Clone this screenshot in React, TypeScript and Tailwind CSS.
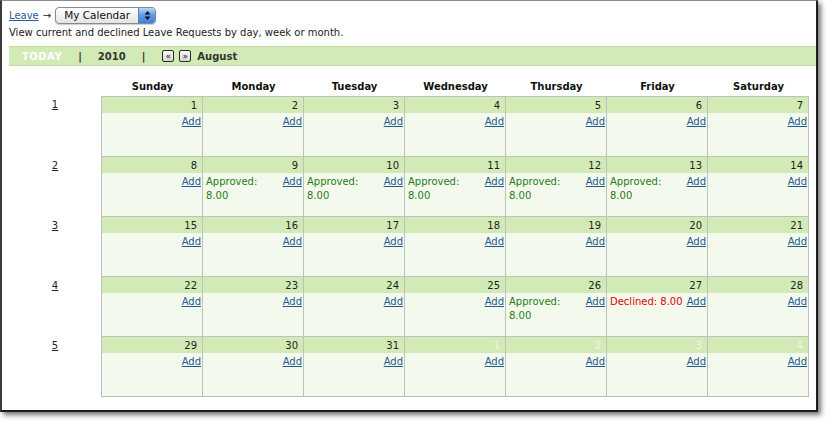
import React from "react";

const weeks: { n: number; other?: boolean; status?: "approved" | "declined" }[][] = [
  [1, 2, 3, 4, 5, 6, 7].map((n) => ({ n })),
  [
    { n: 8 },
    { n: 9, status: "approved" },
    { n: 10, status: "approved" },
    { n: 11, status: "approved" },
    { n: 12, status: "approved" },
    { n: 13, status: "approved" },
    { n: 14 },
  ],
  [15, 16, 17, 18, 19, 20, 21].map((n) => ({ n })),
  [
    { n: 22 },
    { n: 23 },
    { n: 24 },
    { n: 25 },
    { n: 26, status: "approved" },
    { n: 27, status: "declined" },
    { n: 28 },
  ],
  [
    { n: 29 },
    { n: 30 },
    { n: 31 },
    { n: 1, other: true },
    { n: 2, other: true },
    { n: 3, other: true },
    { n: 4, other: true },
  ],
];

const days = ["Sunday", "Monday", "Tuesday", "Wednesday", "Thursday", "Friday", "Saturday"];

function DayCell({ n, other, status }: { n: number; other?: boolean; status?: "approved" | "declined" }) {
  return (
    <div className="w-[101px] border-r border-b border-[#bfc1bd] flex flex-col">
      <div
        className={
          other
            ? "h-[16px] bg-[#d2eab6] text-right pr-[5px] pt-[2px] leading-[14px] text-[#eef7e6]"
            : "h-[16px] bg-[#d2eab6] text-right pr-[5px] pt-[2px] leading-[14px] text-[#1e1e1e]"
        }
      >
        {n}
      </div>
      <div className="h-[43px] bg-[#f3f9ed] flex justify-between pl-[3px] pr-[1px] pt-[2px] leading-[14px]">
        <div>
          {status === "approved" && (
            <span className="text-[#1f7d14]">
              Approved:
              <br />
              8.00
            </span>
          )}
          {status === "declined" && <span className="text-[#e60000] whitespace-nowrap">Declined: 8.00</span>}
        </div>
        <a href="#" className="text-[#245a8f] underline shrink-0">
          Add
        </a>
      </div>
    </div>
  );
}

function NavBtn({ ch }: { ch: string }) {
  return (
    <span className="w-[12px] h-[12px] border border-[#2a2a2a] rounded-[2px] bg-linear-to-b from-[#fafafa] to-[#d8d8d8] flex items-center justify-center text-[9px] leading-[9px] text-[#111] font-normal">
      {ch}
    </span>
  );
}

export default function App() {
  return (
    <div className="w-[828px] h-[421px] bg-white overflow-hidden font-['DejaVu_Sans',sans-serif] text-[10px] text-[#222]">
      <div className="w-[818px] h-[412px] border-l-2 border-t border-r-2 border-b-2 border-l-[#3a3a3a] border-t-[#8c8c8c] border-r-[#1c1c1c] border-b-[#1c1c1c] shadow-[3px_3px_5px_rgba(0,0,0,0.55)] pl-[7px] pt-[5px] bg-white">
        {/* breadcrumb */}
        <div className="flex items-center h-[19px]">
          <a href="#" className="text-[#2a5d91] underline leading-[12px] pt-[1px]">
            Leave
          </a>
          <span className="ml-[4px] text-[#222] leading-[12px] pt-[1px]">→</span>
          <div className="ml-[4px] w-[101px] h-[17px] rounded-[4px] border border-[#8a8a8a] bg-linear-to-b from-white to-[#e4e4e4] shadow-[0_1px_1px_rgba(0,0,0,0.2)] flex items-center overflow-hidden">
            <span className="pl-[8px] flex-1 text-[10.5px] leading-[15px] text-[#111]">My Calendar</span>
            <span className="w-[17px] h-full bg-linear-to-b from-[#b7d6f8] via-[#5c9ae8] to-[#3b7fdc] border-l border-[#5a7fb5] flex items-center justify-center">
              <svg width="7" height="11" viewBox="0 0 7 11">
                <polygon points="3.5,1 6.5,4.5 0.5,4.5" fill="#111" />
                <polygon points="0.5,6.5 6.5,6.5 3.5,10" fill="#111" />
              </svg>
            </span>
          </div>
        </div>
        {/* description */}
        <div className="mt-[2px] leading-[12px] text-[#222]">
          View current and declined Leave Requests by day, week or month.
        </div>
        {/* nav bar */}
        <div className="mt-[7px] h-[20px] bg-[#d2eab6] border-t border-b border-[#c3dca7] flex items-center pl-[13px] font-bold text-[#333]">
          <span className="text-white tracking-[0.5px]">TODAY</span>
          <span className="ml-[16px]">|</span>
          <span className="ml-[16px]">2010</span>
          <span className="ml-[16px]">|</span>
          <span className="ml-[17px]">
            <NavBtn ch="«" />
          </span>
          <span className="ml-[5px]">
            <NavBtn ch="»" />
          </span>
          <span className="ml-[6px]">August</span>
        </div>
        {/* headers */}
        <div className="flex h-[30px] pt-[15px] leading-[12px] font-bold text-[#111]">
          <div className="w-[93px]" />
          {days.map((d) => (
            <div key={d} className="w-[101px] text-center">
              {d}
            </div>
          ))}
        </div>
        {/* grid */}
        <div className="flex flex-col">
          {weeks.map((w, i) => (
            <div key={i} className="flex">
              <div className="w-[92px] text-center leading-[16px] pt-[1px]">
                <a href="#" className="underline text-[#222]">
                  {i + 1}
                </a>
              </div>
              <div className={i === 0 ? "flex border-l border-t border-[#bfc1bd]" : "flex border-l border-[#bfc1bd]"}>
                {w.map((c, j) => (
                  <DayCell key={j} n={c.n} other={c.other} status={c.status} />
                ))}
              </div>
            </div>
          ))}
        </div>
      </div>
    </div>
  );
}
